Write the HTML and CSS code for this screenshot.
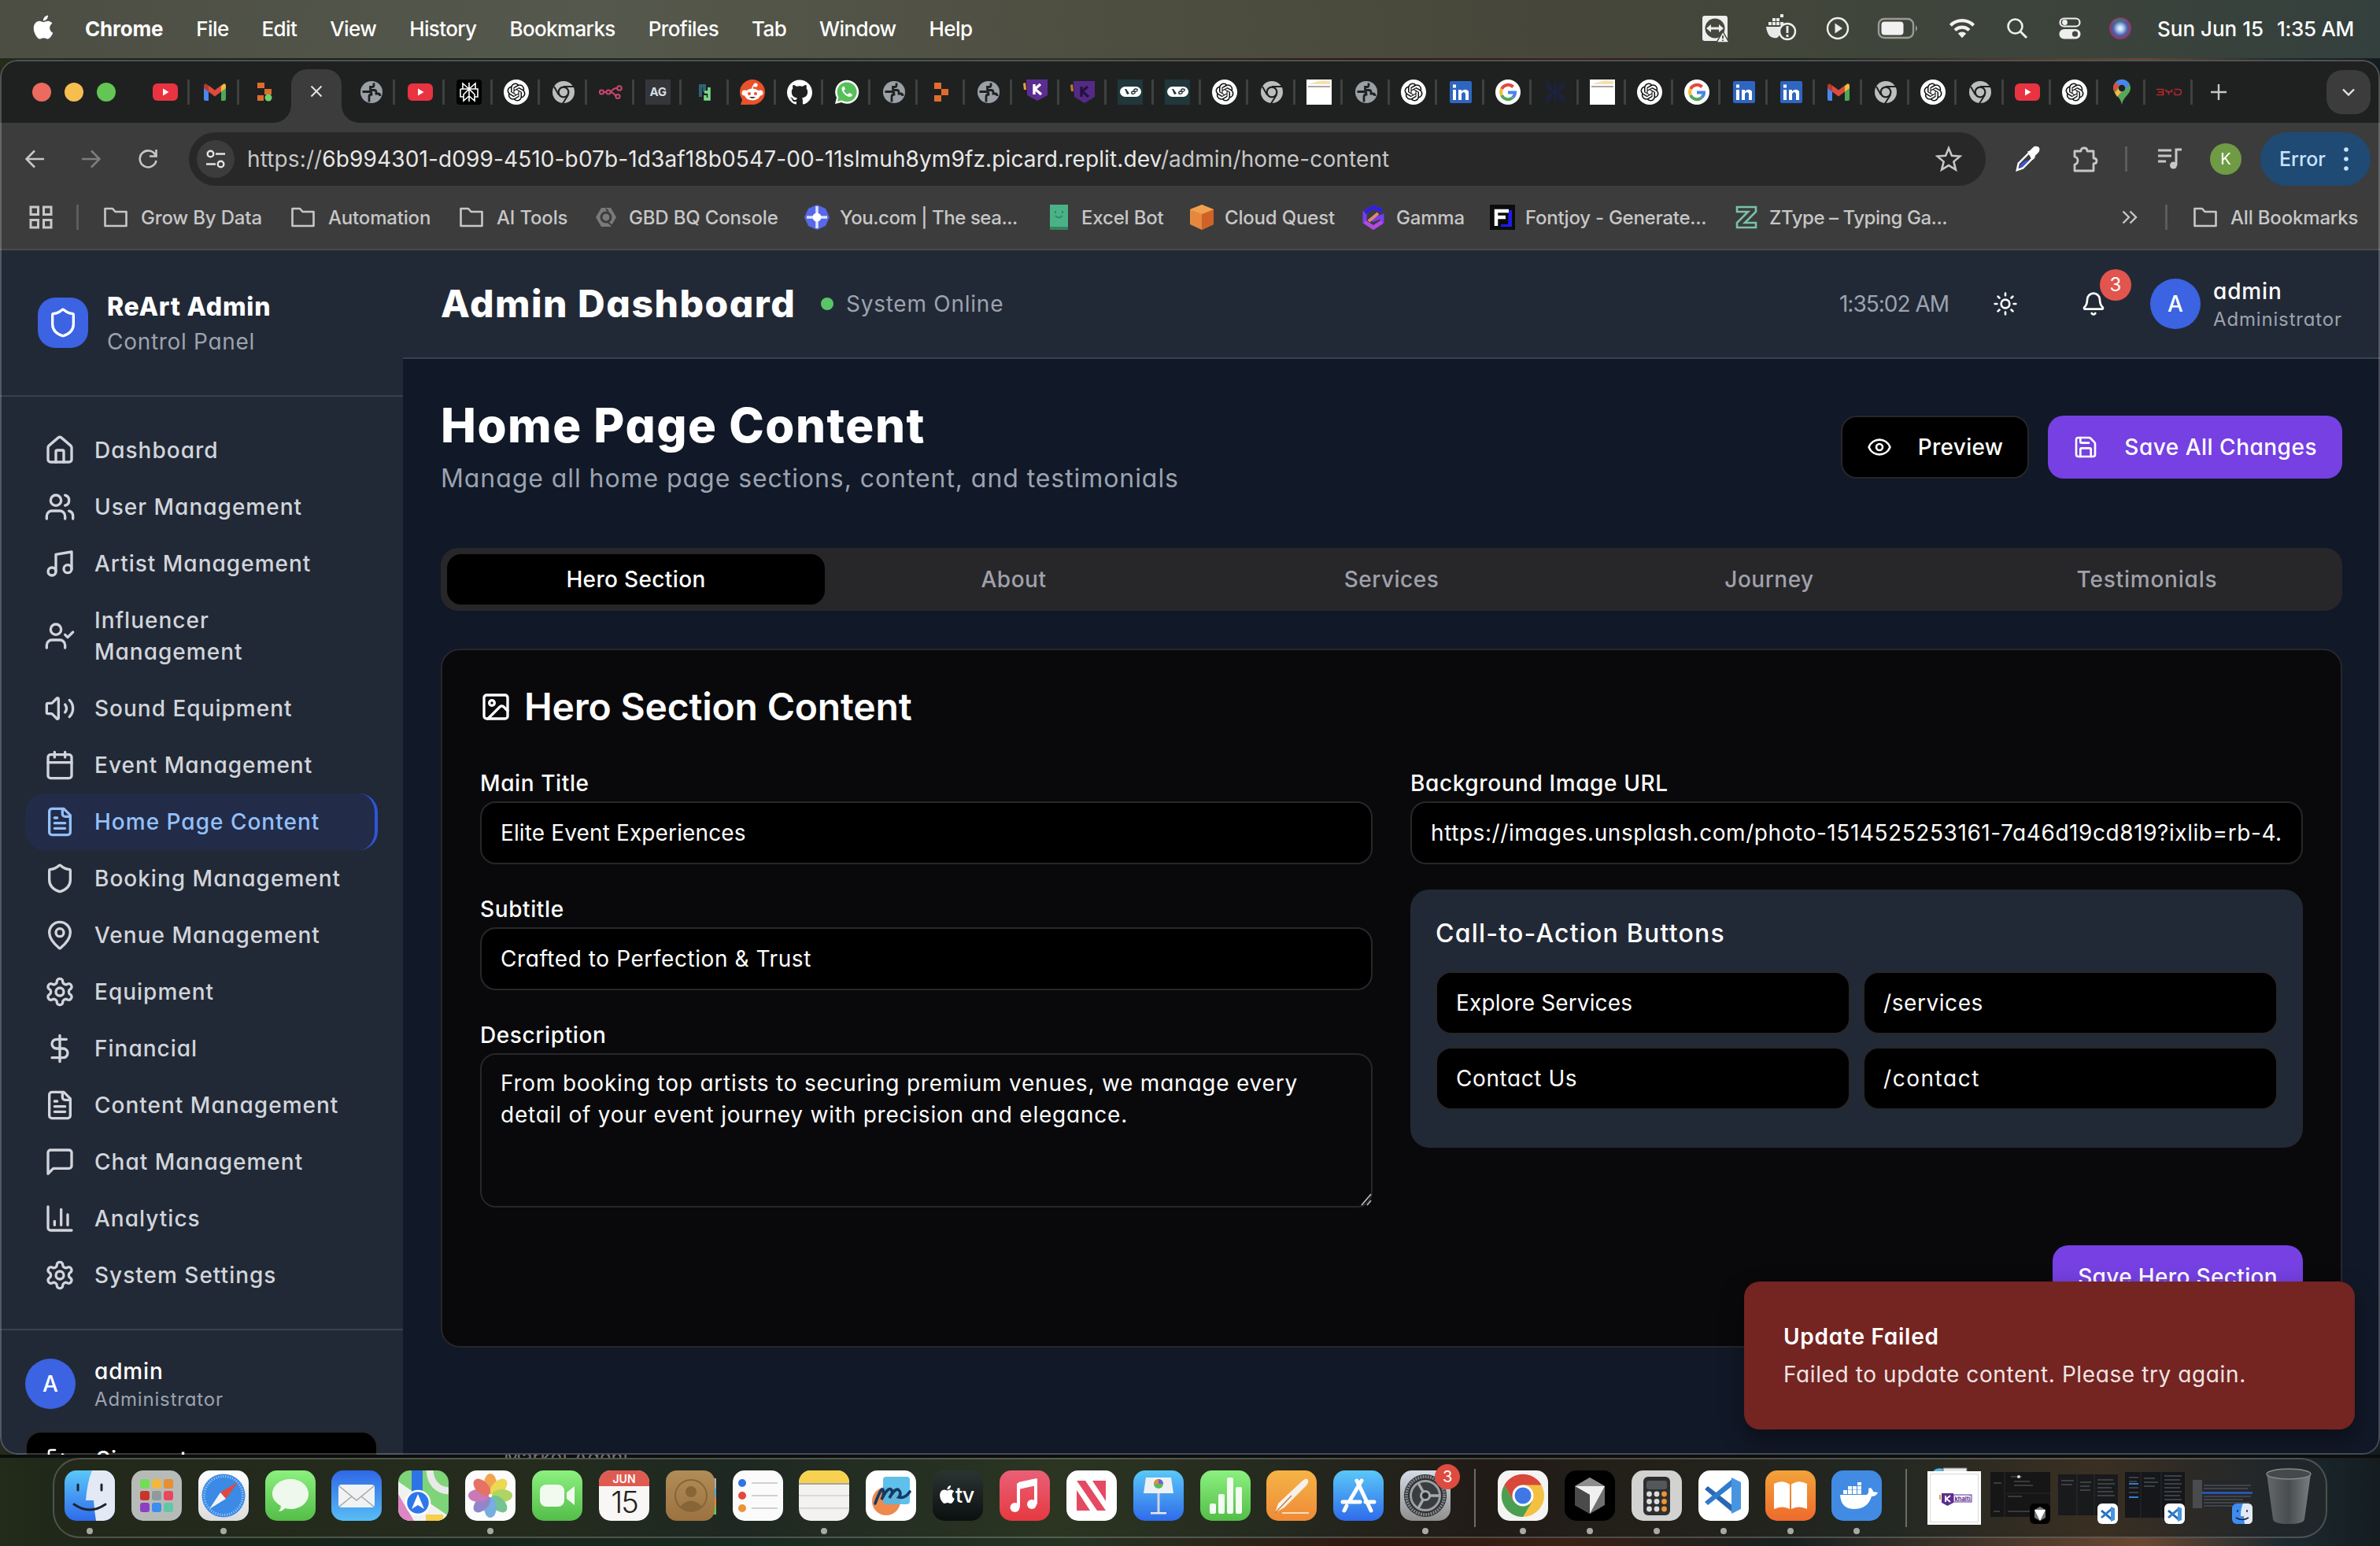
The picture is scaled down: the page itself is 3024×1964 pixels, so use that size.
FILE: index.html
```html
<!DOCTYPE html>
<html lang="en">
<head>
<meta charset="utf-8">
<title>Admin Dashboard</title>
<link rel="stylesheet" href="styles.css">
</head>
<body>
<svg class="sprite" aria-hidden="true">
  <defs>
    <linearGradient id="g-sky" x1="0" y1="0" x2="0" y2="1"><stop offset="0" stop-color="#5ac8f9"/><stop offset="1" stop-color="#2f6bea"/></linearGradient>
    <linearGradient id="g-mail" x1="0" y1="0" x2="0" y2="1"><stop offset="0" stop-color="#2f68e8"/><stop offset="1" stop-color="#58bdf5"/></linearGradient>
    <linearGradient id="g-green" x1="0" y1="0" x2="0" y2="1"><stop offset="0" stop-color="#8bf07f"/><stop offset="1" stop-color="#54bd48"/></linearGradient>
    <linearGradient id="g-orange" x1="0" y1="0" x2="0" y2="1"><stop offset="0" stop-color="#f5b445"/><stop offset="1" stop-color="#ef8a38"/></linearGradient>
    <linearGradient id="g-book" x1="0" y1="0" x2="0" y2="1"><stop offset="0" stop-color="#f2a33a"/><stop offset="1" stop-color="#ee6a2c"/></linearGradient>
    <linearGradient id="g-red" x1="0" y1="0" x2="0" y2="1"><stop offset="0" stop-color="#ea6078"/><stop offset="1" stop-color="#e5393f"/></linearGradient>
    <linearGradient id="g-grey" x1="0" y1="0" x2="0" y2="1"><stop offset="0" stop-color="#d3dde6"/><stop offset="1" stop-color="#8f8f8d"/></linearGradient>
    <linearGradient id="g-paper" x1="0" y1="0" x2="0" y2="1"><stop offset="0" stop-color="#ffffff"/><stop offset="1" stop-color="#dcdcdc"/></linearGradient>
    <linearGradient id="g-tv" x1="0" y1="0" x2="0" y2="1"><stop offset="0" stop-color="#2a3532"/><stop offset="1" stop-color="#0b0f10"/></linearGradient>
    <linearGradient id="g-contact" x1="0" y1="0" x2="0" y2="1"><stop offset="0" stop-color="#b08d57"/><stop offset="1" stop-color="#9c7240"/></linearGradient>
    <linearGradient id="g-trash" x1="0" y1="0" x2="1" y2="0"><stop offset="0" stop-color="#6f7375"/><stop offset=".5" stop-color="#505456"/><stop offset="1" stop-color="#8a8e90"/></linearGradient>
    <radialGradient id="g-siri"><stop offset="0" stop-color="#fff"/><stop offset=".3" stop-color="#a9c8ee"/><stop offset=".65" stop-color="#4a5fa8"/><stop offset="1" stop-color="#97335f"/></radialGradient>
    <clipPath id="c-tile"><rect width="64" height="64" rx="15"/></clipPath>
  </defs>

  <symbol id="i-shield" viewBox="0 0 24 24"><path d="M20 13c0 5-3.500 7.500-7.660 8.950a1 1 0 0 1-.67-.01C7.500 20.500 4 18 4 13V6a1 1 0 0 1 1-1c2 0 4.500-1.200 6.240-2.720a1.170 1.170 0 0 1 1.520 0C14.510 3.810 17 5 19 5a1 1 0 0 1 1 1z"/></symbol>
  <symbol id="i-home" viewBox="0 0 24 24"><path d="M15 21v-8a1 1 0 0 0-1-1h-4a1 1 0 0 0-1 1v8"/><path d="M3 10a2 2 0 0 1 .709-1.528l7-5.999a2 2 0 0 1 2.582 0l7 5.999A2 2 0 0 1 21 10v9a2 2 0 0 1-2 2H5a2 2 0 0 1-2-2z"/></symbol>
  <symbol id="i-users" viewBox="0 0 24 24"><path d="M16 21v-2a4 4 0 0 0-4-4H6a4 4 0 0 0-4 4v2"/><circle cx="9" cy="7" r="4"/><path d="M22 21v-2a4 4 0 0 0-3-3.870"/><path d="M16 3.130a4 4 0 0 1 0 7.750"/></symbol>
  <symbol id="i-music" viewBox="0 0 24 24"><path d="M9 18V5l12-2v13"/><circle cx="6" cy="18" r="3"/><circle cx="18" cy="16" r="3"/></symbol>
  <symbol id="i-user-check" viewBox="0 0 24 24"><path d="m16 11 2 2 4-4"/><path d="M16 21v-2a4 4 0 0 0-4-4H6a4 4 0 0 0-4 4v2"/><circle cx="9" cy="7" r="4"/></symbol>
  <symbol id="i-volume" viewBox="0 0 24 24"><path d="M11 4.702a.705.705 0 0 0-1.203-.498L6.413 7.587A1.400 1.400 0 0 1 5.416 8H3a1 1 0 0 0-1 1v6a1 1 0 0 0 1 1h2.416a1.400 1.400 0 0 1 .997.413l3.383 3.384A.705.705 0 0 0 11 19.298z"/><path d="M16 9a5 5 0 0 1 0 6"/><path d="M19.364 18.364a9 9 0 0 0 0-12.728"/></symbol>
  <symbol id="i-calendar" viewBox="0 0 24 24"><path d="M8 2v4M16 2v4"/><rect width="18" height="18" x="3" y="4" rx="2"/><path d="M3 10h18"/></symbol>
  <symbol id="i-file" viewBox="0 0 24 24"><path d="M15 2H6a2 2 0 0 0-2 2v16a2 2 0 0 0 2 2h12a2 2 0 0 0 2-2V7Z"/><path d="M14 2v4a2 2 0 0 0 2 2h4M10 9H8M16 13H8M16 17H8"/></symbol>
  <symbol id="i-pin" viewBox="0 0 24 24"><path d="M20 10c0 4.993-5.539 10.193-7.399 11.799a1 1 0 0 1-1.202 0C9.539 20.193 4 14.993 4 10a8 8 0 0 1 16 0"/><circle cx="12" cy="10" r="3"/></symbol>
  <symbol id="i-gear" viewBox="0 0 24 24"><path d="M12.220 2h-.44a2 2 0 0 0-2 2v.18a2 2 0 0 1-1 1.730l-.43.25a2 2 0 0 1-2 0l-.15-.08a2 2 0 0 0-2.730.73l-.22.38a2 2 0 0 0 .73 2.730l.15.1a2 2 0 0 1 1 1.720v.51a2 2 0 0 1-1 1.740l-.15.09a2 2 0 0 0-.73 2.730l.22.38a2 2 0 0 0 2.730.73l.15-.08a2 2 0 0 1 2 0l.43.25a2 2 0 0 1 1 1.730V20a2 2 0 0 0 2 2h.44a2 2 0 0 0 2-2v-.18a2 2 0 0 1 1-1.730l.43-.25a2 2 0 0 1 2 0l.15.08a2 2 0 0 0 2.730-.73l.22-.39a2 2 0 0 0-.73-2.730l-.15-.08a2 2 0 0 1-1-1.740v-.5a2 2 0 0 1 1-1.740l.15-.09a2 2 0 0 0 .73-2.730l-.22-.38a2 2 0 0 0-2.730-.73l-.15.08a2 2 0 0 1-2 0l-.43-.25a2 2 0 0 1-1-1.730V4a2 2 0 0 0-2-2z"/><circle cx="12" cy="12" r="3"/></symbol>
  <symbol id="i-dollar" viewBox="0 0 24 24"><path d="M12 2v20M17 5H9.500a3.500 3.500 0 0 0 0 7h5a3.500 3.500 0 0 1 0 7H6"/></symbol>
  <symbol id="i-chat" viewBox="0 0 24 24"><path d="M21 15a2 2 0 0 1-2 2H7l-4 4V5a2 2 0 0 1 2-2h14a2 2 0 0 1 2 2z"/></symbol>
  <symbol id="i-chart" viewBox="0 0 24 24"><path d="M3 3v16a2 2 0 0 0 2 2h16M18 17V9M13 17V5M8 17v-3"/></symbol>
  <symbol id="i-logout" viewBox="0 0 24 24"><path d="M9 21H5a2 2 0 0 1-2-2V5a2 2 0 0 1 2-2h4M16 17l5-5-5-5M21 12H9"/></symbol>
  <symbol id="i-sun" viewBox="0 0 24 24"><circle cx="12" cy="12" r="4"/><path d="M12 2v2M12 20v2M4.930 4.930l1.410 1.410M17.660 17.660l1.410 1.410M2 12h2M20 12h2M6.340 17.660l-1.410 1.410M19.070 4.930l-1.410 1.410"/></symbol>
  <symbol id="i-bell" viewBox="0 0 24 24"><path d="M10.268 21a2 2 0 0 0 3.464 0"/><path d="M3.262 15.326A1 1 0 0 0 4 17h16a1 1 0 0 0 .74-1.673C19.410 13.956 18 12.499 18 8A6 6 0 0 0 6 8c0 4.499-1.411 5.956-2.738 7.326"/></symbol>
  <symbol id="i-eye" viewBox="0 0 24 24"><path d="M2.062 12.348a1 1 0 0 1 0-.696 10.750 10.750 0 0 1 19.876 0 1 1 0 0 1 0 .696 10.750 10.750 0 0 1-19.876 0"/><circle cx="12" cy="12" r="3"/></symbol>
  <symbol id="i-save" viewBox="0 0 24 24"><path d="M15.200 3a2 2 0 0 1 1.400.6l3.800 3.800a2 2 0 0 1 .6 1.400V19a2 2 0 0 1-2 2H5a2 2 0 0 1-2-2V5a2 2 0 0 1 2-2z"/><path d="M17 21v-7a1 1 0 0 0-1-1H8a1 1 0 0 0-1 1v7M7 3v4a1 1 0 0 0 1 1h7"/></symbol>
  <symbol id="i-image" viewBox="0 0 24 24"><rect width="18" height="18" x="3" y="3" rx="2"/><circle cx="9" cy="9" r="2"/><path d="m21 15-3.086-3.086a2 2 0 0 0-2.828 0L6 21"/></symbol>

  <symbol id="m-apple" viewBox="0 0 24 24"><path fill="#fff" d="M12.152 6.896c-.948 0-2.415-1.078-3.960-1.040-2.040.027-3.910 1.183-4.961 3.014-2.117 3.675-.546 9.103 1.519 12.090 1.013 1.454 2.208 3.090 3.792 3.039 1.520-.065 2.090-.987 3.935-.987 1.831 0 2.350.987 3.960.948 1.637-.026 2.676-1.480 3.676-2.948 1.156-1.688 1.636-3.325 1.662-3.415-.039-.013-3.182-1.221-3.220-4.857-.026-3.040 2.480-4.494 2.597-4.559-1.429-2.090-3.623-2.324-4.390-2.376-2-.156-3.675 1.090-4.610 1.090zM15.530 3.830c.843-1.012 1.400-2.427 1.245-3.830-1.207.052-2.662.805-3.532 1.818-.78.896-1.454 2.338-1.273 3.714 1.338.104 2.715-.688 3.559-1.701"/></symbol>

  <symbol id="f-yt" viewBox="0 0 32 32"><rect y="5" width="32" height="22" rx="6" fill="#ea3340"/><path d="M13 11.500v9l7.500-4.500z" fill="#fff"/></symbol>
  <symbol id="f-gmail" viewBox="0 0 32 32"><path d="M2 8v17q0 2 2 2h4V14z" fill="#4a86ee"/><path d="M30 8v17q0 2-2 2h-4V14z" fill="#4fa757"/><path d="M24 8l3-2.500q3-1 3 2.500v3l-6 4.500z" fill="#f3bb42"/><path d="M8 8L5 5.500Q2 5 2 8v3l6 4.500z" fill="#b83a2e"/><path d="M8 7.500l8 6 8-6v8l-8 6-8-6z" fill="#dd4b3e"/></symbol>
  <symbol id="f-replit-dot" viewBox="0 0 32 32"><path d="M7 4h9v7H7zM16 12h9v7h-9zM7 20h8v7H7z" fill="#e06c2b"/><circle cx="21" cy="23" r="4.500" fill="#6fd06c"/></symbol>
  <symbol id="f-replit" viewBox="0 0 32 32"><path d="M7 4h9v8H7zM16 12h9v8h-9zM7 20h9v8H7z" fill="#e06c2b"/></symbol>
  <symbol id="f-globe" viewBox="0 0 32 32"><circle cx="16" cy="16" r="14" fill="#9aa0a6"/><path d="M4.500 15.500h9q2.500 0 2.500 2.500v1q-3 0-3 3v6.500" fill="none" stroke="#1f2121" stroke-width="2.800"/><path d="M19 4.500v3q0 2-2.500 2h-2v3q0 1 2 1h3q2.500 0 2.500 3v1.500h2q3 0 3 3" fill="none" stroke="#1f2121" stroke-width="2.800"/></symbol>
  <symbol id="f-perp" viewBox="0 0 32 32"><rect width="32" height="32" rx="4" fill="#000"/><path d="M16 4v24M8 5l8 7 8-7v7H8zM5 12h22v10h-4M5 12v10h4M16 12l-7 7v8l7-6 7 6v-8z" fill="none" stroke="#fff" stroke-width="1.600"/></symbol>
  <symbol id="f-openai" viewBox="0 0 32 32"><circle cx="16" cy="16" r="16" fill="#fff"/><path transform="translate(4.500 4.500) scale(.96)" fill="#111" d="M22.282 9.821a5.985 5.985 0 0 0-.516-4.910 6.046 6.046 0 0 0-6.510-2.900A6.065 6.065 0 0 0 4.981 4.182a5.985 5.985 0 0 0-3.998 2.900 6.046 6.046 0 0 0 .743 7.097 5.980 5.980 0 0 0 .511 4.910 6.051 6.051 0 0 0 6.515 2.900A5.985 5.985 0 0 0 13.260 24a6.056 6.056 0 0 0 5.772-4.206 5.989 5.989 0 0 0 3.998-2.900 6.056 6.056 0 0 0-.748-7.073zm-9.022 12.608a4.476 4.476 0 0 1-2.876-1.041l.142-.08 4.778-2.758a.795.795 0 0 0 .393-.681v-6.737l2.020 1.169a.071.071 0 0 1 .038.052v5.583a4.504 4.504 0 0 1-4.495 4.494zm-9.661-4.125a4.471 4.471 0 0 1-.535-3.014l.142.085 4.783 2.758a.771.771 0 0 0 .781 0l5.843-3.369v2.332a.08.08 0 0 1-.033.062L9.740 19.950a4.499 4.499 0 0 1-6.141-1.646zM2.341 7.896a4.485 4.485 0 0 1 2.366-1.973V11.600a.766.766 0 0 0 .388.677l5.814 3.354-2.020 1.169a.076.076 0 0 1-.071 0l-4.830-2.787A4.504 4.504 0 0 1 2.341 7.872zm16.596 3.856L13.104 8.364 15.119 7.200a.076.076 0 0 1 .071 0l4.830 2.791a4.494 4.494 0 0 1-.677 8.104v-5.677a.79.79 0 0 0-.407-.667zm2.011-3.023l-.142-.085-4.774-2.782a.776.776 0 0 0-.785 0L9.409 9.230V6.897a.066.066 0 0 1 .028-.062l4.830-2.787a4.499 4.499 0 0 1 6.680 4.660zM8.307 12.863l-2.020-1.164a.08.08 0 0 1-.038-.057V6.074a4.499 4.499 0 0 1 7.376-3.454l-.142.081L8.704 5.459a.795.795 0 0 0-.393.681zm1.098-2.365l2.602-1.500 2.607 1.500v2.999l-2.597 1.500-2.607-1.500Z"/></symbol>
  <symbol id="f-chrome" viewBox="0 0 32 32"><circle cx="16" cy="16" r="14" fill="#bdbdbd"/><path d="M16 9h13M10 19.500L4 9M22 19.500l-7 11" stroke="#1f2121" stroke-width="2"/><circle cx="16" cy="16" r="7.500" fill="#1f2121"/><circle cx="16" cy="16" r="5.200" fill="#bdbdbd"/></symbol>
  <symbol id="f-n8n" viewBox="0 0 32 32"><g fill="none" stroke="#c9476c" stroke-width="2"><circle cx="4.500" cy="16" r="2.600"/><circle cx="13" cy="16" r="2.600"/><circle cx="27" cy="11" r="2.800"/><circle cx="25" cy="21.500" r="2.600"/><path d="M7 16h3.500M16 16q3-5 8-5M16 16q4 1 6.500 5"/></g></symbol>
  <symbol id="f-hi" viewBox="0 0 32 32"><path d="M10 6v16M10 8h5v8" stroke="#2f6277" stroke-width="4" fill="none"/><path d="M15 16h6M21 10v15h-5v-5" stroke="#7ddc8a" stroke-width="3.500" fill="none"/></symbol>
  <symbol id="f-reddit" viewBox="0 0 32 32"><circle cx="16" cy="16" r="16" fill="#ea5228"/><path d="M1 32l3-9 9 9z" fill="#ea5228"/><circle cx="6" cy="17" r="3.500" fill="#fff"/><circle cx="26" cy="17" r="3.500" fill="#fff"/><ellipse cx="16" cy="19" rx="10" ry="7.500" fill="#fff"/><circle cx="20" cy="7" r="2.600" fill="#fff"/><path d="M16 12q0-5 4-5" stroke="#fff" stroke-width="1.500" fill="none"/><circle cx="12" cy="18" r="2" fill="#ea5228"/><circle cx="20" cy="18" r="2" fill="#ea5228"/><path d="M12 22h8q-4 4-8 0" fill="#333"/></symbol>
  <symbol id="f-github" viewBox="0 0 24 24"><path fill="#fff" d="M12 .297c-6.630 0-12 5.373-12 12 0 5.303 3.438 9.800 8.205 11.385.6.113.82-.258.82-.577 0-.285-.01-1.040-.015-2.040-3.338.724-4.042-1.610-4.042-1.610C4.422 18.070 3.633 17.700 3.633 17.700c-1.087-.744.084-.729.084-.729 1.205.084 1.838 1.236 1.838 1.236 1.070 1.835 2.809 1.305 3.495.998.108-.776.417-1.305.76-1.605-2.665-.3-5.466-1.332-5.466-5.930 0-1.310.465-2.380 1.235-3.220-.135-.303-.54-1.523.105-3.176 0 0 1.005-.322 3.300 1.230.96-.267 1.980-.399 3-.405 1.020.006 2.040.138 3 .405 2.280-1.552 3.285-1.230 3.285-1.230.645 1.653.24 2.873.12 3.176.765.84 1.230 1.910 1.230 3.220 0 4.610-2.805 5.625-5.475 5.920.42.36.81 1.096.81 2.220 0 1.606-.015 2.896-.015 3.286 0 .315.21.69.825.57C20.565 22.092 24 17.592 24 12.297c0-6.627-5.373-12-12-12"/></symbol>
  <symbol id="f-wa" viewBox="0 0 32 32"><path d="M1 31l2-8A15 15 0 1 1 9 29z" fill="#fff"/><path d="M4 28l1.500-5.500a12.500 12.500 0 1 1 4 4z" fill="#57c05b"/><path d="M11 9q-3 2 0 7t8 6q4 0 4-3l-4-2-2 2q-4-2-5-5l2-2-1.500-3.500z" fill="#fff"/></symbol>
  <symbol id="f-k" viewBox="0 0 32 32"><path d="M0 5l3-1 1 9H1z" fill="#e9a23b"/><path d="M4 0h27v20l-13 7-13-7z" fill="#5c2d91"/><path d="M14 6v13M22 6l-7 6 8 7" stroke="#fff" stroke-width="3.400" fill="none"/></symbol>
  <symbol id="f-k2" viewBox="0 0 32 32"><path d="M0 7l3-1 1 9H1z" fill="#c07f2c"/><path d="M4 2h27v20l-13 8-13-8z" fill="#552a87"/><path d="M14 9v13M22 9l-7 6 8 7" stroke="#25123f" stroke-width="3.400" fill="none"/></symbol>
  <symbol id="f-wb" viewBox="0 0 32 32"><rect width="32" height="32" fill="#20373b"/><rect x="3" y="9" width="27" height="13" rx="6.500" fill="#fff"/><path d="M9 12l3 7 3-1-4-6z" fill="#20373b"/><path d="M18 18q-1-3 2-3 3 0 2 2t-4 1zM21 15q-1-3 2-3 3 0 2 2t-4 1z" stroke="#20373b" stroke-width="1.400" fill="none"/></symbol>
  <symbol id="f-doc" viewBox="0 0 32 32"><rect width="32" height="32" fill="#fff"/><path d="M2 6l10-3 8-2 10 1v4z" fill="#f3e2b0"/><path d="M2 8h28v2H2z" fill="#a8a8a8"/></symbol>
  <symbol id="f-in" viewBox="0 0 32 32"><rect x="2" y="2" width="28" height="28" rx="2" fill="#2f66c2"/><path d="M6 13h4v13H6zM6 6.500h4v4H6zM13 13h4v2q5-4.500 9 0v11h-4v-8q-2-4-5 0v8h-4z" fill="#fff"/></symbol>
  <symbol id="f-g" viewBox="0 0 32 32"><circle cx="16" cy="16" r="16" fill="#fff"/><g fill="none" stroke-width="4"><path d="M22.500 9.500A9 9 0 0 0 8 12" stroke="#e5493a"/><path d="M8 12a9 9 0 0 0 0 8" stroke="#f5bc3e"/><path d="M8 20a9 9 0 0 0 14 3" stroke="#54a655"/><path d="M16 16.500h9q0 4-3 6.500" stroke="#4a84ee"/></g></symbol>
  <symbol id="f-dark" viewBox="0 0 32 32"><path d="M16 3v26M4 9l12 7 12-7M4 23l12-7 12 7M5 3l6 9M27 3l-6 9M5 29l6-9M27 29l-6-9" stroke="#1c2240" stroke-width="3" fill="none"/></symbol>
  <symbol id="f-maps" viewBox="0 0 32 32"><path d="M16 0a11 11 0 0 1 11 11c0 8-9 10-11 21C14 21 5 19 5 11A11 11 0 0 1 16 0z" fill="#57a65a"/><path d="M5 11A11 11 0 0 1 8 3.500l5 4.500-6 8z" fill="#e04a3f"/><path d="M16 0a11 11 0 0 1 10 6.500L19 13 8 3.500A11 11 0 0 1 16 0z" fill="#4a84ee"/><path d="M7 17l5-6 4 4-6 7z" fill="#f3bb42"/><circle cx="16" cy="11" r="4.200" fill="#1f2121"/></symbol>
  <symbol id="f-byd" viewBox="0 0 32 32"><path d="M0 12.500h8.500v7H0M2 16h6.500M12 12.500v1q0 2 3.500 2h4v-3M15.500 15.500v4M23 12.500h5q3.500 0 3.500 3.500t-3.500 3.500h-5M23 15.500v4" fill="none" stroke="#b8252d" stroke-width="1.700"/></symbol>

  <symbol id="b-folder" viewBox="0 0 32 32"><path d="M2.500 5h9.500l3.500 4h14v18h-27z" fill="none" stroke="#c7c7c7" stroke-width="2.600" stroke-linejoin="round"/></symbol>
</svg>

<div class="desktop">
  <header class="menubar">
    <nav class="menus">
      <svg class="apple"><use href="#m-apple"/></svg>
      <b>Chrome</b><span>File</span><span>Edit</span><span>View</span><span>History</span><span>Bookmarks</span><span>Profiles</span><span>Tab</span><span>Window</span><span>Help</span>
    </nav>
    <div class="status">
      <svg viewBox="0 0 34 34"><rect x="1" y="1" width="32" height="32" rx="3" fill="#eee"/><circle cx="17" cy="17" r="12.500" fill="#45483c"/><path d="M6 17l6-5v3.500h10V12l6 5-6 5v-3.500H12V22z" fill="#eee"/><path d="M27 21l8 14H19z" fill="#eee" stroke="#45483c" stroke-width="1.500"/><path d="M27 26v4M27 31.500v1.500" stroke="#45483c" stroke-width="1.800"/></svg>
      <svg viewBox="0 0 40 36"><path d="M1 16h20q-2 12-6 14-12 2-14-14z" fill="#e8e8e8"/><path d="M4 10h4v4H4zM9 10h4v4H9zM14 10h4v4h-4zM9 5h4v4H9zM14 5h4v4h-4zM19 10h4v4h-4zM19 0h4v4h-4z" fill="#e8e8e8"/><circle cx="28" cy="22" r="10" fill="#41443b" stroke="#eee" stroke-width="2.400"/><path d="M28 15v9M28 26v3" stroke="#eee" stroke-width="2.800"/></svg>
      <svg viewBox="0 0 32 32"><circle cx="16" cy="16" r="13" fill="none" stroke="#eee" stroke-width="2.400"/><path d="M12.500 9.500v13L22 16z" fill="#eee"/></svg>
      <svg viewBox="0 0 54 28"><rect x="2" y="2" width="44" height="24" rx="7" fill="none" stroke="#9a9b94" stroke-width="2.400"/><rect x="5.500" y="5.500" width="28" height="17" rx="4" fill="#f1f1f1"/><path d="M49 10q4 4 0 8z" fill="#9a9b94"/></svg>
      <svg viewBox="0 0 36 28"><g fill="none" stroke="#f1f1f1" stroke-width="4.400"><path d="M2.500 10a22 22 0 0 1 31 0"/><path d="M8.500 16.500a13.500 13.500 0 0 1 19 0"/></g><path d="M12.500 21a8 8 0 0 1 11 0L18 27z" fill="#f1f1f1"/></svg>
      <svg viewBox="0 0 28 28"><circle cx="11.500" cy="11.500" r="9" fill="none" stroke="#eee" stroke-width="2.600"/><path d="M18 18l8 8" stroke="#eee" stroke-width="3"/></svg>
      <svg viewBox="0 0 28 28"><rect x="1.500" y="1.500" width="25" height="10" rx="5" fill="none" stroke="#eee" stroke-width="2.200"/><circle cx="7.500" cy="6.500" r="3.400" fill="#eee"/><rect x=".5" y="15" width="27" height="12.500" rx="6.200" fill="#eee"/><circle cx="20.500" cy="21.200" r="3.600" fill="#43463c"/></svg>
      <svg viewBox="0 0 28 28"><circle cx="14" cy="14" r="14" fill="url(#g-siri)"/><path d="M3 8a13 13 0 0 1 20-3q-10 0-20 3z" fill="#39806f" opacity=".7"/></svg>
      <span class="date">Sun Jun 15</span><span class="clock">1:35 AM</span>
    </div>
  </header>

  <div class="window">
    <div class="tabstrip">
      <div class="lights"><i class="red"></i><i class="yellow"></i><i class="green"></i></div>
      <div class="pinned">
        <span><svg><use href="#f-yt"/></svg></span><span><svg><use href="#f-gmail"/></svg></span><span><svg><use href="#f-replit-dot"/></svg></span>
      </div>
      <div class="active-tab"><svg viewBox="0 0 16 16"><path d="M1.500 1.500l13 13M14.500 1.500l-13 13" stroke="#e3e3e3" stroke-width="2"/></svg></div>
      <div class="tabs">
        <span><svg><use href="#f-globe"/></svg></span><span><svg><use href="#f-yt"/></svg></span><span><svg><use href="#f-perp"/></svg></span><span><svg><use href="#f-openai"/></svg></span><span><svg><use href="#f-chrome"/></svg></span><span><svg><use href="#f-n8n"/></svg></span><span><b class="fav-ag">AG</b></span><span><svg><use href="#f-hi"/></svg></span><span><svg><use href="#f-reddit"/></svg></span><span><svg><use href="#f-github"/></svg></span><span><svg><use href="#f-wa"/></svg></span><span><svg><use href="#f-globe"/></svg></span><span><svg><use href="#f-replit"/></svg></span><span><svg><use href="#f-globe"/></svg></span><span><svg><use href="#f-k"/></svg></span><span><svg><use href="#f-k2"/></svg></span><span><svg><use href="#f-wb"/></svg></span><span><svg><use href="#f-wb"/></svg></span><span><svg><use href="#f-openai"/></svg></span><span><svg><use href="#f-chrome"/></svg></span><span><svg><use href="#f-doc"/></svg></span><span><svg><use href="#f-globe"/></svg></span><span><svg><use href="#f-openai"/></svg></span><span><svg><use href="#f-in"/></svg></span><span><svg><use href="#f-g"/></svg></span><span><svg><use href="#f-dark"/></svg></span><span><svg><use href="#f-doc"/></svg></span><span><svg><use href="#f-openai"/></svg></span><span><svg><use href="#f-g"/></svg></span><span><svg><use href="#f-in"/></svg></span><span><svg><use href="#f-in"/></svg></span><span><svg><use href="#f-gmail"/></svg></span><span><svg><use href="#f-chrome"/></svg></span><span><svg><use href="#f-openai"/></svg></span><span><svg><use href="#f-chrome"/></svg></span><span><svg><use href="#f-yt"/></svg></span><span><svg><use href="#f-openai"/></svg></span><span><svg><use href="#f-maps"/></svg></span><span><svg><use href="#f-byd"/></svg></span>
      </div>
      <svg class="new-tab" viewBox="0 0 20 20"><path d="M10 0v20M0 10h20" stroke="#c7c7c7" stroke-width="2.400"/></svg>
      <div class="tab-search"><svg viewBox="0 0 16 10"><path d="M1 1.500l7 7 7-7" fill="none" stroke="#e3e3e3" stroke-width="2.400"/></svg></div>
    </div>

    <div class="toolbar">
      <svg class="t-back" viewBox="0 0 24 24"><path d="M24 12H2M12 1.500L1.500 12 12 22.500" fill="none" stroke="#c7c7c7" stroke-width="2.600"/></svg>
      <svg class="t-fwd" viewBox="0 0 24 24"><path d="M0 12h22M12 1.500L22.500 12 12 22.500" fill="none" stroke="#7d7d7d" stroke-width="2.600"/></svg>
      <svg class="t-reload" viewBox="0 0 24 24"><path d="M21.500 7A10.500 10.500 0 1 0 22.500 14M22.500 0v8.500H14" fill="none" stroke="#c7c7c7" stroke-width="2.600"/></svg>
      <div class="omnibox">
        <span class="tune"><svg viewBox="0 0 26 26"><g fill="none" stroke="#e3e3e3" stroke-width="2.400"><circle cx="6.500" cy="6.500" r="3.800"/><path d="M13 6.500h12M1 19.500h12"/><circle cx="19.500" cy="19.500" r="3.800"/></g></svg></span>
        <span class="url"><i>https://</i>6b994301-d099-4510-b07b-1d3af18b0547-00-11slmuh8ym9fz.picard.replit.dev<i>/admin/home-content</i></span>
        <svg class="star" viewBox="0 0 32 32"><path d="M16 3l3.700 9 9.800.800-7.500 6.400 2.400 9.600L16 23.600l-8.400 5.200L10 19.200 2.500 12.800l9.800-.8z" fill="none" stroke="#c7c7c7" stroke-width="2.400"/></svg>
      </div>
      <div class="tools">
        <svg class="dropper" viewBox="0 0 36 36"><path d="M4 33l2-9L21 9l6 6-15 15z" fill="none" stroke="#fff" stroke-width="2.600"/><path d="M9 25l6-5h5l-8 8-5 2z" fill="#3d55d8"/><path d="M18 8l3-1 6-6q5-1 7 2 1 4-1 6l-6 6 0 3-3 1z" fill="#fff"/></svg>
        <svg class="puzzle" viewBox="0 0 34 34"><path d="M4 7h8q0-4 4-4t4 4h8v9q4 0 4 3.500T28 23v9H4v-8q4-1 4-5t-4-5z" fill="none" stroke="#c7c7c7" stroke-width="2.800" stroke-linejoin="round"/></svg>
        <i class="vsep"></i>
        <svg class="media" viewBox="0 0 32 32"><path d="M1 5h17M1 12h17M1 19h10" stroke="#c7c7c7" stroke-width="3"/><path d="M24 24V4h7" stroke="#c7c7c7" stroke-width="3" fill="none"/><circle cx="20.500" cy="24" r="4.500" fill="#c7c7c7"/></svg>
        <span class="profile">K</span>
        <span class="error-pill">Error<svg viewBox="0 0 6 30"><circle cx="3" cy="3" r="2.800"/><circle cx="3" cy="15" r="2.800"/><circle cx="3" cy="27" r="2.800"/></svg></span>
      </div>
    </div>

    <div class="bookmarks">
      <svg class="apps" viewBox="0 0 30 30"><g fill="none" stroke="#c7c7c7" stroke-width="3"><path d="M2 2h9.500v9.500H2zM18.500 2H28v9.500h-9.500zM2 18.500h9.500V28H2zM18.500 18.500H28V28h-9.500z"/></g></svg>
      <i class="vsep"></i>
      <span class="bm"><svg><use href="#b-folder"/></svg>Grow By Data</span>
      <span class="bm"><svg><use href="#b-folder"/></svg>Automation</span>
      <span class="bm"><svg><use href="#b-folder"/></svg>AI Tools</span>
      <span class="bm"><svg viewBox="0 0 32 32"><path d="M10 4h12l7 12-7 12H10L3 16z" fill="#7a7a7a"/><circle cx="16" cy="16" r="6" fill="none" stroke="#3c3c3c" stroke-width="3"/><path d="M16 5l3 4M24 27l-6-5" stroke="#3c3c3c" stroke-width="2"/></svg>GBD BQ Console</span>
      <span class="bm tight"><svg viewBox="0 0 32 32"><path d="M16 0l11 5 5 11-5 11-11 5-11-5L0 16 5 5z" fill="#5768e8"/><path d="M16 2v28M3 16h26" stroke="#dfe4ff" stroke-width="3.500"/><circle cx="16" cy="16" r="5.500" fill="#fff"/></svg>You.com | The sea...</span>
      <span class="bm"><svg viewBox="0 0 32 32"><path d="M5 0h23v32H5z" fill="#4bb287"/><path d="M5 28h23v4H5z" fill="#37825f"/><path d="M12 14q4 5 9 0M12 8v3M21 8v3" stroke="#2e8d65" stroke-width="2" fill="none"/></svg>Excel Bot</span>
      <span class="bm"><svg viewBox="0 0 32 32"><path d="M16 0l15 6v19l-15 7-15-7V6z" fill="#e5883d"/><path d="M16 12l15-6v19l-15 7z" fill="#cf6226"/><path d="M16 0l15 6-15 6L1 6z" fill="#f0a04e"/></svg>Cloud Quest</span>
      <span class="bm"><svg viewBox="0 0 32 32"><path d="M27 8L16 3 5 10v12l11 7 11-7v-7l-13 5" fill="none" stroke="#7a3df0" stroke-width="5"/><path d="M5 22l11 7 11-7" fill="none" stroke="#b14be0" stroke-width="5"/><path d="M10 21l12-10" stroke="#e08a6e" stroke-width="4"/><path d="M27 8L16 3 5 10" fill="none" stroke="#2f1fe0" stroke-width="5"/></svg>Gamma</span>
      <span class="bm fontjoy"><svg viewBox="0 0 32 32"><rect width="32" height="32" fill="#0c0c0c"/><path d="M24 7h4v21H14v-3h9z" fill="#1c1cf0"/><path d="M8 27V8h16M8 16h12" stroke="#fff" stroke-width="4.500" fill="none"/></svg>Fontjoy - Generate...</span>
      <span class="bm tight"><svg viewBox="0 0 32 32"><path d="M4 3h24v6L14 23h14v6H4v-6L18 9H4z" fill="none" stroke="#79c2a8" stroke-width="2.600"/></svg>ZType – Typing Ga...</span>
      <svg class="more" viewBox="0 0 20 18"><path d="M1.500 1.500L9 9l-7.500 7.500M10.500 1.500L18 9l-7.500 7.500" fill="none" stroke="#c7c7c7" stroke-width="2.400"/></svg>
      <i class="vsep"></i>
      <span class="bm"><svg><use href="#b-folder"/></svg>All Bookmarks</span>
    </div>

    <div class="page">
      <aside class="sidebar">
        <div class="brand">
          <span class="logo"><svg class="ico"><use href="#i-shield"/></svg></span>
          <div><strong>ReArt Admin</strong><p>Control Panel</p></div>
        </div>
        <nav class="nav">
          <a><svg class="ico"><use href="#i-home"/></svg><span>Dashboard</span></a>
          <a><svg class="ico"><use href="#i-users"/></svg><span>User Management</span></a>
          <a><svg class="ico"><use href="#i-music"/></svg><span>Artist Management</span></a>
          <a><svg class="ico"><use href="#i-user-check"/></svg><span>Influencer<br>Management</span></a>
          <a><svg class="ico"><use href="#i-volume"/></svg><span>Sound Equipment</span></a>
          <a><svg class="ico"><use href="#i-calendar"/></svg><span>Event Management</span></a>
          <a class="current"><svg class="ico"><use href="#i-file"/></svg><span>Home Page Content</span></a>
          <a><svg class="ico"><use href="#i-shield"/></svg><span>Booking Management</span></a>
          <a><svg class="ico"><use href="#i-pin"/></svg><span>Venue Management</span></a>
          <a><svg class="ico"><use href="#i-gear"/></svg><span>Equipment</span></a>
          <a><svg class="ico"><use href="#i-dollar"/></svg><span>Financial</span></a>
          <a><svg class="ico"><use href="#i-file"/></svg><span>Content Management</span></a>
          <a><svg class="ico"><use href="#i-chat"/></svg><span>Chat Management</span></a>
          <a><svg class="ico"><use href="#i-chart"/></svg><span>Analytics</span></a>
          <a><svg class="ico"><use href="#i-gear"/></svg><span>System Settings</span></a>
        </nav>
        <div class="account">
          <div class="person"><span class="avatar">A</span><div><b>admin</b><small>Administrator</small></div></div>
          <button class="signout"><svg class="ico"><use href="#i-logout"/></svg>Sign out</button>
        </div>
      </aside>

      <main class="main">
        <div class="topbar">
          <h2>Admin Dashboard</h2>
          <i class="online-dot"></i><span class="online">System Online</span>
          <div class="topright">
            <span class="time">1:35:02 AM</span>
            <span class="iconbtn"><svg class="ico"><use href="#i-sun"/></svg></span>
            <span class="iconbtn"><svg class="ico"><use href="#i-bell"/></svg><em>3</em></span>
            <div class="person"><span class="avatar">A</span><div><b>admin</b><small>Administrator</small></div></div>
          </div>
        </div>

        <div class="content">
          <div class="heading">
            <div><h1>Home Page Content</h1><p>Manage all home page sections, content, and testimonials</p></div>
            <div class="actions">
              <button class="btn outline"><svg class="ico"><use href="#i-eye"/></svg>Preview</button>
              <button class="btn"><svg class="ico"><use href="#i-save"/></svg>Save All Changes</button>
            </div>
          </div>
          <div class="segments"><span class="on">Hero Section</span><span>About</span><span>Services</span><span>Journey</span><span>Testimonials</span></div>

          <section class="card">
            <h3><svg class="ico"><use href="#i-image"/></svg>Hero Section Content</h3>
            <div class="columns">
              <div class="col">
                <label>Main Title<input value="Elite Event Experiences" class="snug"></label>
                <label>Subtitle<input value="Crafted to Perfection &amp; Trust"></label>
                <label>Description<textarea>From booking top artists to securing premium venues, we manage every detail of your event journey with precision and elegance.</textarea><svg class="grip" viewBox="0 0 14 18"><path d="M1 17L13 3M8 17l5-6" stroke="#b5b5b5" stroke-width="1.800"/></svg></label>
              </div>
              <div class="col">
                <label>Background Image URL<input value="https://images.unsplash.com/photo-1514525253161-7a46d19cd819?ixlib=rb-4."></label>
                <div class="cta">
                  <h4>Call-to-Action Buttons</h4>
                  <div class="cta-grid"><input value="Explore Services" class="snug"><input value="/services"><input value="Contact Us"><input value="/contact" class="wide"></div>
                </div>
              </div>
            </div>
            <div class="card-foot"><button class="btn">Save Hero Section</button></div>
          </section>
        </div>
      </main>

      <div class="toast"><b>Update Failed</b><p>Failed to update content. Please try again.</p></div>
    </div>
  </div>

  <div class="behind"><span>Market Agent</span></div>

  <footer class="dock">
    <div class="apps-row">
      <span class="app run"><svg viewBox="0 0 64 64"><g clip-path="url(#c-tile)"><path fill="url(#g-sky)" d="M0 0h64v64H0z"/><path d="M35 0h29v64H40q-2-12-3-26H27Q29 14 35 0z" fill="#e3eaf5"/></g><path d="M17 18v7M47 18v7" stroke="#1c2430" stroke-width="3" stroke-linecap="round"/><path d="M12 43q20 14 40 0" fill="none" stroke="#1c2430" stroke-width="3" stroke-linecap="round"/></svg></span>
      <span class="app"><svg viewBox="0 0 64 64"><rect width="64" height="64" rx="15" fill="#b7bbb8"/><rect x="11" y="11" width="12" height="12" rx="3" fill="#72dd57"/><rect x="26" y="11" width="12" height="12" rx="3" fill="#f2b83c"/><rect x="41" y="11" width="12" height="12" rx="3" fill="#e88e35"/><rect x="11" y="26" width="12" height="12" rx="3" fill="#c9342b"/><rect x="26" y="26" width="12" height="12" rx="3" fill="#8e9a9c"/><rect x="41" y="26" width="12" height="12" rx="3" fill="#e8475f"/><rect x="11" y="41" width="12" height="12" rx="3" fill="#8d3fc4"/><rect x="26" y="41" width="12" height="12" rx="3" fill="#3d8df0"/><rect x="41" y="41" width="12" height="12" rx="3" fill="#62c7a5"/></svg></span>
      <span class="app run"><svg viewBox="0 0 64 64"><rect width="64" height="64" rx="15" fill="url(#g-paper)"/><circle cx="32" cy="32" r="27.500" fill="#3a8ae6"/><circle cx="32" cy="32" r="24.500" fill="none" stroke="#a9cff7" stroke-width="3" stroke-dasharray="1 2"/><path d="M50 15L28 28l7 8z" fill="#e4473c"/><path d="M14 49l14-21 7 8z" fill="#f3f3f3"/></svg></span>
      <span class="app"><svg viewBox="0 0 64 64"><rect width="64" height="64" rx="15" fill="url(#g-green)"/><path d="M32 11c13 0 23 8 23 19s-10 19-23 19q-4 0-7-1-3 4-8 4 3-3 3-7C13 41 9 36 9 30c0-11 10-19 23-19z" fill="#eef8ec"/></svg></span>
      <span class="app"><svg viewBox="0 0 64 64"><rect width="64" height="64" rx="15" fill="url(#g-mail)"/><rect x="9" y="18" width="46" height="29" rx="4" fill="#f1f2f3"/><path d="M10 20l22 18 22-18M10 46l16-13M54 46L38 33" fill="none" stroke="#a4a9ae" stroke-width="1.600"/></svg></span>
      <span class="app"><svg viewBox="0 0 64 64"><g clip-path="url(#c-tile)"><path fill="#7fd479" d="M0 0h64v64H0z"/><path d="M0 14l64 44v6H0z" fill="#f1f2f0"/><path d="M0 30l20 34H0z" fill="#dd86c4"/><path d="M35 56h22v8H35z" fill="#f5cf4d"/><path d="M40 0q2 24 24 26" fill="none" stroke="#e9e9e9" stroke-width="9"/><path d="M17 0h14v34H17z" fill="#2f74e6"/></g><circle cx="25" cy="41" r="15" fill="#2d77ea" stroke="#fff" stroke-width="2.500"/><path d="M25 30l8 19-8-5-8 5z" fill="#fff"/></svg></span>
      <span class="app run"><svg viewBox="0 0 64 64"><rect width="64" height="64" rx="15" fill="#fcfcfc"/><g opacity=".88"><ellipse cx="32" cy="17" rx="8" ry="13" fill="#f09a37"/><ellipse cx="32" cy="17" rx="8" ry="13" fill="#e9d43c" transform="rotate(45 32 32)"/><ellipse cx="32" cy="17" rx="8" ry="13" fill="#a5cf4f" transform="rotate(90 32 32)"/><ellipse cx="32" cy="17" rx="8" ry="13" fill="#62bd84" transform="rotate(135 32 32)"/><ellipse cx="32" cy="17" rx="8" ry="13" fill="#64a5db" transform="rotate(180 32 32)"/><ellipse cx="32" cy="17" rx="8" ry="13" fill="#8276c4" transform="rotate(225 32 32)"/><ellipse cx="32" cy="17" rx="8" ry="13" fill="#c168ae" transform="rotate(270 32 32)"/><ellipse cx="32" cy="17" rx="8" ry="13" fill="#e4604f" transform="rotate(315 32 32)"/></g></svg></span>
      <span class="app"><svg viewBox="0 0 64 64"><rect width="64" height="64" rx="15" fill="url(#g-green)"/><rect x="10" y="18" width="31" height="28" rx="8" fill="#f2faf0"/><path d="M44 28l10-8v24l-10-8z" fill="#f2faf0"/></svg></span>
      <span class="app"><svg viewBox="0 0 64 64"><rect width="64" height="64" rx="15" fill="#f8f7f6"/><path d="M0 20v-5A15 15 0 0 1 15 0h34a15 15 0 0 1 15 15v5z" fill="#df5a50"/><text x="32" y="15.500" text-anchor="middle" class="cal-m">JUN</text><text x="32" y="54" text-anchor="middle" class="cal-d">15</text></svg></span>
      <span class="app"><svg viewBox="0 0 64 64"><path d="M58 10h6v13h-6z" fill="#a9adb0"/><path d="M58 23h6v13h-6z" fill="#4aa7dd"/><path d="M58 34h6v12h-6z" fill="#e5893b"/><path d="M58 45h6v11h-6z" fill="#6ac65a"/><rect width="62" height="64" rx="14" fill="url(#g-contact)"/><circle cx="32" cy="32" r="20" fill="none" stroke="#876536" stroke-width="2"/><circle cx="32" cy="27" r="7" fill="#876536"/><path d="M18 46q14-15 28 0-14 12-28 0z" fill="#876536"/></svg></span>
      <span class="app"><svg viewBox="0 0 64 64"><rect width="64" height="64" rx="15" fill="#fbfbfb"/><path d="M24 16h33M24 32h33M24 48h33" stroke="#c4c4c4" stroke-width="1.500"/><circle cx="12" cy="16" r="5" fill="#2f74e6"/><circle cx="12" cy="32" r="5" fill="#e4473c"/><circle cx="12" cy="48" r="5" fill="#ea9437"/></svg></span>
      <span class="app run"><svg viewBox="0 0 64 64"><rect width="64" height="64" rx="15" fill="#f3f2f0"/><path d="M0 16v-1A15 15 0 0 1 15 0h34a15 15 0 0 1 15 15v1z" fill="#f7d150"/><path d="M0 17h64" stroke="#a7a69e" stroke-width="2"/><path d="M0 32h64M0 48h64" stroke="#d2d1cf" stroke-width="1.500"/></svg></span>
      <span class="app"><svg viewBox="0 0 64 64"><rect width="64" height="64" rx="15" fill="#fff"/><circle cx="26" cy="39" r="18" fill="#ee8a4e"/><rect x="22" y="8" width="34" height="35" rx="4" fill="#4fb9ea" opacity=".9"/><path d="M12 42q8-22 10-17t-2 12q8-16 12-13t-2 11q8-14 12-10t0 9q8 2 14-7" fill="none" stroke="#143a63" stroke-width="3.600" stroke-linecap="round"/></svg></span>
      <span class="app"><svg viewBox="0 0 64 64"><rect width="64" height="64" rx="15" fill="url(#g-tv)"/><use href="#m-apple" x="7" y="19" width="23" height="23"/><text x="29" y="41" class="tv">tv</text></svg></span>
      <span class="app"><svg viewBox="0 0 64 64"><rect width="64" height="64" rx="15" fill="url(#g-red)"/><path d="M24 47V18l22-5v30" fill="none" stroke="#fff" stroke-width="4"/><path d="M24 15l23-5v9l-23 5z" fill="#fff"/><circle cx="19.500" cy="47" r="6" fill="#fff"/><circle cx="41" cy="43" r="6" fill="#fff"/></svg></span>
      <span class="app"><svg viewBox="0 0 64 64"><rect width="64" height="64" rx="15" fill="#fff"/><path d="M13 13h11l26 38H39zM33 13h17v26zM13 25v26h17z" fill="#e54a63"/></svg></span>
      <span class="app"><svg viewBox="0 0 64 64"><rect width="64" height="64" rx="15" fill="url(#g-sky)"/><path d="M16 9h32l3 20H13z" fill="#eef1f4"/><circle cx="32" cy="17" r="6" fill="#5cb85a"/><path d="M32 11a6 6 0 0 1 6 6h-6z" fill="#7a5bd0"/><path d="M32 11a6 6 0 0 0-6 6h6z" fill="#e98a3b"/><path d="M30.500 29h3v25h-3z" fill="#cfd6de"/><path d="M22 53h20v2.500H22z" fill="#e6e9ec"/></svg></span>
      <span class="app"><svg viewBox="0 0 64 64"><rect width="64" height="64" rx="15" fill="url(#g-green)"/><g fill="#f4fbf2"><rect x="12" y="42" width="8" height="13" rx="2"/><rect x="23" y="30" width="8" height="25" rx="2"/><rect x="34" y="9" width="8" height="46" rx="2"/><rect x="45" y="21" width="8" height="34" rx="2"/></g></svg></span>
      <span class="app"><svg viewBox="0 0 64 64"><rect width="64" height="64" rx="15" fill="url(#g-orange)"/><path d="M11 54l4-12L46 13q5-4 7-1 1 3-2 7L23 47z" fill="#f6f1ea"/><path d="M11 54l21-22" stroke="#b9793a" stroke-width="1.200"/><path d="M20 54h34" stroke="#fbdcb5" stroke-width="2"/></svg></span>
      <span class="app"><svg viewBox="0 0 64 64"><rect width="64" height="64" rx="15" fill="url(#g-sky)"/><path d="M36 13L20 40M30 13l18 38M12 40h22M41 40h11M17 45l-3 6" stroke="#fff" stroke-width="5" stroke-linecap="round"/></svg></span>
      <span class="app run"><svg viewBox="0 0 64 64"><rect width="64" height="64" rx="15" fill="url(#g-grey)"/><circle cx="32" cy="32" r="27" fill="#2c2d2f"/><circle cx="32" cy="32" r="24" fill="none" stroke="#85898c" stroke-width="4" stroke-dasharray="2 1.200"/><circle cx="32" cy="32" r="18.500" fill="#3a3c3e" stroke="#9b9fa2" stroke-width="3"/><path d="M32 32h18M32 32l-9-16M32 32l-9 16" stroke="#a6aaad" stroke-width="3.500"/><circle cx="32" cy="32" r="5.500" fill="#2c2d2f" stroke="#a6aaad" stroke-width="3"/></svg><em>3</em></span>
    </div>
    <i class="divider"></i>
    <div class="apps-row">
      <span class="app run"><svg viewBox="0 0 64 64"><rect width="64" height="64" rx="15" fill="#f4f4f4"/><circle cx="32" cy="32" r="27" fill="#f3c042"/><path d="M8.500 18.500A27 27 0 0 1 55.500 18.500H32L20 39z" fill="#d8483b"/><path d="M8.500 18.500A27 27 0 0 0 32 59l12-20-12 5-12-5z" fill="#4c9e51"/><circle cx="32" cy="32" r="13.500" fill="#fff"/><circle cx="32" cy="32" r="10.500" fill="#3f78e4"/></svg></span>
      <span class="app run"><svg viewBox="0 0 64 64"><rect width="64" height="64" rx="15" fill="#000"/><path d="M32 9l19 11v24L32 55 13 44V20z" fill="#6f6f6f"/><path d="M32 9l19 11H13z" fill="#8d8d8d"/><path d="M13 20h38L32 55V31z" fill="#f0f0f0"/><path d="M13 20l19 11v24L13 44z" fill="#4a4a4a"/></svg></span>
      <span class="app run"><svg viewBox="0 0 64 64"><rect width="64" height="64" rx="15" fill="#d2d2d0"/><rect x="15" y="8" width="34" height="49" rx="6" fill="#2d2f31"/><rect x="19" y="13" width="26" height="11" rx="3" fill="#54585b"/><g fill="#dcdcdc"><circle cx="22.500" cy="30" r="3.400"/><circle cx="32" cy="30" r="3.400"/><circle cx="22.500" cy="39.500" r="3.400"/><circle cx="32" cy="39.500" r="3.400"/><circle cx="22.500" cy="49" r="3.400"/><circle cx="32" cy="49" r="3.400"/></g><g fill="#ee9434"><circle cx="41.500" cy="30" r="3.400"/><circle cx="41.500" cy="39.500" r="3.400"/><circle cx="41.500" cy="49" r="3.400"/></g></svg></span>
      <span class="app run"><svg viewBox="0 0 64 64"><rect width="64" height="64" rx="15" fill="#fff"/><path d="M8 24l4-4 32 25v9z" fill="#2a66b4"/><path d="M8 40l4 4 32-25v-9z" fill="#2f7ccc"/><path d="M42 9l12 6v34l-12 6z" fill="#4795e0"/></svg></span>
      <span class="app run"><svg viewBox="0 0 64 64"><rect width="64" height="64" rx="15" fill="url(#g-book)"/><path d="M31 18q-9-7-20-1v32q11-5 20 0zM33 18q9-7 20-1v32q-11-5-20 0z" fill="#fff"/></svg></span>
      <span class="app run"><svg viewBox="0 0 64 64"><rect width="64" height="64" rx="15" fill="#418be3"/><path d="M11 31h34q3-3 2-8l3-1q3 3 3 5l6 1q-2 5-8 5-5 16-22 16-17 0-18-18z" fill="#fff"/><path d="M15 25h5v5h-5zM21 25h5v5h-5zM27 25h5v5h-5zM33 25h5v5h-5zM21 20h5v4.500h-5zM27 20h5v4.500h-5zM33 20h5v4.500h-5zM33 15h5v4h-5z" fill="#fff"/></svg></span>
    </div>
    <i class="divider"></i>
    <svg class="khalti" viewBox="0 0 68 74"><path d="M8 4q4-4 12-2v6H8z" fill="#57b4e3"/><path d="M20 1h30v10H20z" fill="#e9e9e9" stroke="#777"/><rect y="5" width="68" height="68" fill="#fff"/><rect x="3.500" y="8.500" width="61" height="61" fill="none" stroke="#d9d9d9"/><path d="M15 35h2v6h-2z" fill="#e9a23b"/><path d="M18 33h15v12l-7.500 4L18 45z" fill="#5c2d91"/><path d="M23 36v8M29 36l-5 4 5 4" stroke="#fff" stroke-width="2" fill="none"/><rect x="33" y="35" width="23" height="9" fill="#fff" stroke="#5c2d91"/><text x="34.500" y="42.500" class="khalti-t">khalti</text></svg>
    <div class="thumbs">
      <svg viewBox="0 0 76 70"><rect y="2" width="76" height="57" fill="#161616"/><path d="M18 2v57M20 29h56" stroke="#2a2a2a"/><path d="M4 16h10M26 8h14M30 14h20M30 19h24M22 33h18M4 52h8M22 52h28" stroke="#484848" stroke-width="1.500"/><circle cx="36" cy="8" r="2" fill="#ddd"/><rect x="50" y="42" width="26" height="26" rx="6" fill="#000"/><path d="M63 46l7 4v10l-7 4-7-4V50z" fill="#777"/><path d="M56 50h14l-7 14z" fill="#fff"/></svg>
      <svg viewBox="0 0 76 70"><rect y="5" width="76" height="52" fill="#181a1c"/><path d="M24 5v52M46 5v52" stroke="#2b2d30"/><path d="M4 13h16M4 18h14M28 15h14M28 20h12M28 25h13M50 12h20M50 17h22M50 22h18M50 27h20M50 32h22" stroke="#4a4f53" stroke-width="1.500"/><rect x="50" y="42" width="26" height="26" rx="6" fill="#fff"/><path d="M54 52l2-2 12 10v4z" fill="#2a66b4"/><path d="M54 59l2 2 12-10v-4z" fill="#2f7ccc"/><path d="M67 46l5 2v15l-5 2z" fill="#4795e0"/></svg>
      <svg viewBox="0 0 76 70"><rect y="2" width="76" height="58" fill="#15171a"/><path d="M20 2v58M46 2v58" stroke="#2b2d30"/><path d="M5 9h12M5 14h10M5 22h12M5 28h12M24 10h14M24 15h18M24 20h14M50 7h22M50 12h20M50 17h22M50 22h20M50 27h22M50 32h20M50 37h22" stroke="#4a4f53" stroke-width="1.500"/><path d="M5 17h12M5 34h12" stroke="#2f7fd6" stroke-width="2"/><rect x="50" y="42" width="26" height="26" rx="6" fill="#fff"/><path d="M54 52l2-2 12 10v4z" fill="#2a66b4"/><path d="M54 59l2 2 12-10v-4z" fill="#2f7ccc"/><path d="M67 46l5 2v15l-5 2z" fill="#4795e0"/></svg>
      <svg viewBox="0 0 76 70"><rect y="12" width="76" height="36" fill="#25272a"/><rect y="12" width="12" height="36" fill="#4a4b4d"/><path d="M14 19h60M14 23h56M14 33h60M14 37h50M14 41h58M14 45h54" stroke="#5d6267" stroke-width="1.200"/><path d="M12 28.500h64" stroke="#2b5cc4" stroke-width="2.500"/><rect x="50" y="42" width="26" height="26" rx="6" fill="#3d8df0"/><path d="M64 42h6q6 0 6 6v14q0 6-6 6h-4l-1-10h-4q0-10 3-16z" fill="#e3eaf5"/><path d="M57 50v3M69 50v3M55 60q8 5 16 0" stroke="#1c2430" stroke-width="1.500" fill="none"/></svg>
    </div>
    <svg class="trash" viewBox="0 0 58 72"><path d="M1 7l8 58q1 6 20 6t20-6l8-58z" fill="url(#g-trash)" opacity=".85"/><ellipse cx="29" cy="7.500" rx="28" ry="6.500" fill="#45494b" stroke="#85898b" stroke-width="1.500"/></svg>
  </footer>
</div>
</body>
</html>
```
FILE: styles.css
```css
* { box-sizing: border-box; }
body { margin: 0; font-family: Inter, "Liberation Sans", sans-serif; }
p, h1, h2, h3, h4 { margin: 0; }
i, em { font-style: normal; }
svg { display: block; flex: none; }
.sprite { position: absolute; width: 0; height: 0; }
.cal-m { font: 600 14px Inter, sans-serif; fill: #fff; }
.cal-d { font: 300 38px Inter, sans-serif; fill: #222; letter-spacing: -2px; }
.tv { font: 500 27px Inter, sans-serif; fill: #fff; letter-spacing: -1px; }
.khalti-t { font: 700 7.500px Inter, sans-serif; fill: #5c2d91; }

.desktop {
  width: 3024px; height: 1964px; overflow: hidden;
  display: flex; flex-direction: column;
  background:
    linear-gradient(90deg, #232b1a 0, #1a2417 6%, #15241b 15%, #17281f 30%, #243322 45%, #30180f 57%, #3a2015 66%, #16201f 75%, #6a4732 90%, #1c2a30 96%, #141c20 100%);
}

/* menu bar */
.menubar {
  height: 74px; flex: none; display: flex; align-items: center; justify-content: space-between;
  padding: 0 33px 0 40px; color: #fff; font-size: 26px; font-weight: 500;
  background: linear-gradient(90deg, #4c4e44 0, #55584c 25%, #4d4d3f 50%, #46473a 66%, #3d443b 85%, #34403d 100%);
}
.menus, .status { display: flex; align-items: center; position: relative; top: -1px; }
.menus { gap: 42px; letter-spacing: -.62px; }
.menus b { font-weight: 700; letter-spacing: -.2px; }
.apple { width: 30px; height: 31px; margin: -4px -4px 0 0; }
.status > svg { height: 28px; }
.status svg:nth-child(1) { width: 34px; height: 34px; margin-right: 47px; margin-left: 2px; overflow: visible; }
.status svg:nth-child(2) { width: 40px; height: 36px; margin-right: 36px; }
.status svg:nth-child(3) { width: 32px; height: 34px; margin-right: 34px; }
.status svg:nth-child(4) { width: 54px; margin-right: 37px; }
.status svg:nth-child(5) { width: 34px; margin-right: 39px; }
.status svg:nth-child(6) { width: 28px; margin-right: 39px; }
.status svg:nth-child(7) { width: 28px; margin-right: 36px; }
.status svg:nth-child(8) { width: 28px; margin-right: 33px; }
.date { width: 152px; white-space: nowrap; }
.clock { width: 98px; white-space: nowrap; letter-spacing: -.3px; }

/* browser window */
.window {
  height: 1772px; margin-top: 2px; flex: none; display: flex; flex-direction: column;
  border-radius: 22px; overflow: hidden; background: #3c3c3c; position: relative;
}
.window::after {
  content: ""; position: absolute; inset: 0; border: 2px solid rgba(255,255,255,.22); border-radius: 22px; pointer-events: none;
}
.tabstrip { height: 80px; flex: none; background: #1f2121; display: flex; align-items: center; padding: 1px 12px 0 41px; }
.lights { display: flex; gap: 17px; width: 137px; }
.lights i { width: 24px; height: 24px; border-radius: 50%; }
.red { background: #ed6a5e; }
.yellow { background: #f5be4f; }
.green { background: #62c554; }
.pinned, .tabs { display: flex; }
.pinned span, .tabs span { display: flex; align-items: center; justify-content: center; height: 32px; padding-left: 3px; border-right: 3px solid #3f4040; }
.pinned span { width: 63px; }
.pinned span:last-child { border-color: transparent; }
.tabs span { width: 60px; }
.tabs span:nth-child(2) { width: 63px; }
.tabs span:nth-child(3) { width: 61px; }
.pinned svg, .tabs svg { width: 32px; height: 32px; flex: none; }
.fav-ag { width: 32px; height: 32px; flex: none; background: #35363a; color: #d9dde0; font-size: 15px; line-height: 32px; text-align: center; letter-spacing: -.5px; }
.active-tab {
  width: 64px; height: 68px; align-self: flex-end; margin: 0 8px 0 3px; background: #3c3c3c; border-radius: 20px 20px 0 0;
  display: flex; align-items: center; justify-content: center; position: relative; padding-bottom: 12px;
}
.active-tab::before, .active-tab::after { content: ""; position: absolute; bottom: 0; width: 22px; height: 22px; }
.active-tab::before { right: 100%; background: radial-gradient(circle at 0 0, transparent 21.500px, #3c3c3c 22px); }
.active-tab::after { left: 100%; background: radial-gradient(circle at 100% 0, transparent 21.500px, #3c3c3c 22px); }
.active-tab svg { width: 16px; height: 16px; }
.new-tab { width: 20px; height: 20px; margin-left: 23px; }
.tab-search { width: 56px; height: 56px; margin-left: auto; border-radius: 20px; background: #3c3c3c; display: flex; align-items: center; justify-content: center; }
.tab-search svg { width: 16px; height: 10px; }

.toolbar { height: 92px; flex: none; display: flex; align-items: center; padding: 0 12px 0 32px; }
.t-back, .t-fwd, .t-reload { width: 24px; height: 24px; }
.t-fwd { margin-left: 48px; }
.t-reload { margin-left: 48px; }
.omnibox { width: 2283px; height: 68px; margin-left: 40px; border-radius: 34px; background: #282828; display: flex; align-items: center; padding: 0 30px 0 10px; }
.tune { width: 48px; height: 48px; border-radius: 50%; background: #3c3c3c; display: flex; align-items: center; justify-content: center; }
.tune svg { width: 26px; height: 26px; }
.url { margin-left: 16px; font-size: 28px; color: #e8e8e8; white-space: nowrap; letter-spacing: .12px; }
.url i { color: #c7c7c7; }
.star { width: 34px; height: 34px; margin-left: auto; }
.tools { display: flex; align-items: center; flex: 1; }
.dropper { width: 34px; height: 36px; margin-left: 36px; }
.puzzle { width: 34px; height: 34px; margin-left: 39px; }
.vsep { width: 3px; height: 32px; background: #5c5c5c; flex: none; }
.tools .vsep { margin-left: 34px; }
.media { width: 32px; height: 32px; margin-left: 38px; }
.profile { width: 40px; height: 40px; margin-left: 35px; border-radius: 50%; background: #6f9b45; color: #fff; font-size: 20px; line-height: 40px; text-align: center; }
.error-pill { width: 140px; height: 68px; margin-left: auto; border-radius: 34px; background: #1f4a73; color: #c9e2fb; font-size: 25px; font-weight: 500; display: flex; align-items: center; padding: 0 28px 0 24px; justify-content: space-between; }
.error-pill svg { width: 6px; height: 30px; fill: #c9e2fb; }

.bookmarks {
  height: 70px; flex: none; display: grid; align-items: center; border-bottom: 2px solid #4a4a4a; padding-bottom: 12px;
  grid-template-columns: 97px 35px 238px 214px 170px 268px 307px 182px 218px 164px 310px 493px 55px 35px 1fr;
  color: #c7c7c7; font-size: 24px; font-weight: 500; white-space: nowrap;
}
.apps { width: 30px; height: 30px; margin-left: 37px; }
.bm { display: flex; align-items: center; gap: 16px; letter-spacing: -.18px; }
.bm svg { width: 32px; height: 32px; }
.bm:nth-child(-n+5) svg { margin-left: -1px; }
.bm:nth-child(n+6) { gap: 13px; }
.bm:last-child { gap: 16px; }
.bm.tight { letter-spacing: -.45px; }
.bm.fontjoy { letter-spacing: -.25px; }
.more { width: 20px; height: 18px; }

/* admin page */
.page {
  flex: 1; min-height: 0; display: flex; position: relative; background: #111827; color: #fff;
  font-size: 28px; line-height: 40px; letter-spacing: .84px; font-feature-settings: "cv11";
}
.ico { width: 40px; height: 40px; fill: none; stroke: currentColor; stroke-width: 2; stroke-linecap: round; stroke-linejoin: round; }
.sidebar { width: 512px; flex: none; background: #222936; }
.brand { height: 186px; padding: 48px; border-bottom: 2px solid #384150; display: flex; align-items: center; gap: 24px; }
.logo { width: 64px; height: 64px; border-radius: 22px; background: #3b63e2; display: flex; align-items: center; justify-content: center; }
.brand strong { display: block; font-size: 32px; line-height: 48px; font-weight: 800; letter-spacing: .75px; }
.brand p { color: #9ca3af; letter-spacing: .7px; }
.nav { padding: 32px; }
.nav a { display: flex; align-items: center; gap: 24px; padding: 16px 24px; color: #d1d5db; font-weight: 500; letter-spacing: 1px; white-space: nowrap; }
.nav .current { background: #222b48; color: #93c0fa; border-radius: 24px; border-right: 4px solid #2f55d8; }
.account { border-top: 2px solid #384150; padding: 32px; height: 240px; }
.person { display: flex; align-items: center; gap: 24px; }
.avatar { width: 64px; height: 64px; border-radius: 50%; background: #3b63e2; font-weight: 500; line-height: 64px; text-align: center; flex: none; letter-spacing: 0; }
.person b { display: block; font-weight: 500; line-height: 40px; }
.person small { display: block; font-size: 24px; line-height: 32px; color: #9ca3af; }
button { font: inherit; letter-spacing: inherit; color: inherit; font-feature-settings: inherit; }
.signout { width: 448px; height: 72px; margin-top: 24px; border: 2px solid #27272a; border-radius: 20px; background: #000; display: flex; align-items: center; gap: 32px; padding: 0 24px; font-weight: 500; }
.signout .ico { width: 32px; height: 32px; }

.main { flex: 1; min-width: 0; }
.topbar { height: 138px; background: #222936; border-bottom: 2px solid #384150; display: flex; align-items: center; padding: 0 48px; }
.topbar h2 { font-size: 48px; line-height: 64px; font-weight: 800; letter-spacing: 1.500px; width: 483px; white-space: nowrap; }
.online-dot { width: 16px; height: 16px; border-radius: 50%; background: #5ac466; margin-right: 16px; }
.online, .time { color: #9ca3af; }
.online { letter-spacing: .75px; }
.time { letter-spacing: -1px; }
.topright { margin-left: auto; display: flex; align-items: center; gap: 32px; }
.iconbtn { width: 80px; height: 72px; display: flex; align-items: center; justify-content: center; position: relative; }
.iconbtn .ico { width: 32px; height: 32px; }
.iconbtn em { position: absolute; top: -8px; right: -8px; width: 40px; height: 40px; border-radius: 50%; background: #e1554e; font-size: 24px; text-align: center; letter-spacing: 0; }
.topright .person { gap: 16px; width: 244px; white-space: nowrap; }

.content { padding: 48px; }
.heading { display: flex; justify-content: space-between; align-items: center; height: 128px; }
h1 { font-size: 60px; line-height: 72px; font-weight: 800; letter-spacing: 1.500px; }
.heading p { margin-top: 8px; font-size: 32px; line-height: 48px; color: #9ca3af; letter-spacing: .93px; }
.actions { display: flex; gap: 24px; }
.btn { height: 80px; padding: 0 32px; border: 0; border-radius: 20px; background: #7640e3; font-weight: 500; display: flex; align-items: center; gap: 33px; white-space: nowrap; letter-spacing: .5px; }
.btn.outline { background: #000; border: 2px solid #27272a; padding: 0 31px; letter-spacing: .3px; }
.btn .ico { width: 32px; height: 32px; }
.card-foot .btn { letter-spacing: .35px; }
.segments { margin-top: 64px; height: 80px; padding: 8px; border-radius: 22px; background: #27272a; display: grid; grid-template-columns: repeat(5, 1fr); color: #a1a1aa; font-weight: 500; text-align: center; line-height: 64px; letter-spacing: .5px; }
.segments .on { background: #000; color: #fff; border-radius: 18px; letter-spacing: .35px; }
.segments span:last-child { letter-spacing: .8px; }
.card { margin-top: 48px; border: 2px solid #27272a; border-radius: 24px; background: #09090b; padding: 48px; }
.card h3 { display: flex; align-items: center; gap: 16px; font-size: 48px; line-height: 48px; font-weight: 600; letter-spacing: -.2px; }
.columns { margin-top: 48px; display: grid; grid-template-columns: 1fr 1fr; gap: 48px; }
.col { display: flex; flex-direction: column; gap: 32px; }
label { display: block; font-weight: 500; line-height: 50px; position: relative; letter-spacing: .6px; }
label > input, label > textarea { margin-top: -2px; }
input, textarea {
  display: block; width: 100%; height: 80px; border: 2px solid #27272a; border-radius: 20px; background: #000; color: #fff;
  font: 400 28px/40px Inter, "Liberation Sans", sans-serif; letter-spacing: .57px; font-feature-settings: "cv11"; padding: 0 24px;
}
.snug { letter-spacing: .13px; }
.wide { letter-spacing: 1.550px; }
textarea { height: 196px; padding: 16px 24px; background: transparent; resize: none; overflow: hidden; letter-spacing: .78px; }
.grip { position: absolute; right: 1px; bottom: 2px; width: 14px; height: 18px; }
.cta { background: #222936; border-radius: 24px; padding: 32px; height: 328px; }
.cta h4 { font-size: 32px; line-height: 48px; font-weight: 500; letter-spacing: 1.200px; }
.cta-grid { margin-top: 24px; display: grid; grid-template-columns: 1fr 1fr; gap: 16px; }
.card-foot { margin-top: 48px; display: flex; justify-content: flex-end; }

.toast { position: absolute; left: 2216px; top: 1310px; width: 776px; height: 188px; border-radius: 20px; background: #742421; padding: 50px; box-shadow: 0 12px 30px rgba(0,0,0,.4); }
.toast b { display: block; font-weight: 600; letter-spacing: .75px; }
.toast p { margin-top: 8px; color: #f1e4e4; letter-spacing: .6px; white-space: nowrap; }

/* dock */
.behind { height: 4px; flex: none; background: #0c0e0c; overflow: hidden; padding-left: 640px; font-size: 25px; line-height: 6px; color: #777; }
.behind span { display: block; height: 4px; overflow: hidden; }
.dock {
  width: 2890px; height: 102px; margin-left: 67px; flex: none; border-radius: 34px; border: 2px solid rgba(255,255,255,.2);
  display: flex; align-items: flex-start; padding: 14px 0 0 13px;
  background: linear-gradient(90deg, #22291b 0, #252c1d 20%, #1e2822 30%, #2b3522 44%, #262c20 52%, #211b17 63%, #232019 70%, #222722 80%, #3a2f22 90%, #20262a 98%);
}
.apps-row { display: flex; gap: 20.860px; }
.app { position: relative; width: 64px; height: 64px; }
.app > svg { width: 64px; height: 64px; overflow: visible; }
.app.run::after { content: ""; position: absolute; left: 28px; top: 73px; width: 8px; height: 8px; border-radius: 50%; background: #a7aaa3; }
.app em { position: absolute; left: 44px; top: -8px; width: 32px; height: 32px; border-radius: 50%; background: #de4b3f; color: #fff; font-size: 20px; line-height: 32px; text-align: center; }
.divider { width: 2px; height: 74px; background: #6b6b66; margin: -2px 28px 0 30px; }
.khalti { width: 68px; height: 74px; margin: -4px 12px 0 -2px; }
.thumbs { display: flex; gap: 9.500px; }
.thumbs svg { width: 76px; height: 70px; }
.trash { width: 58px; height: 72px; margin: -3px 0 0 17px; }
```
